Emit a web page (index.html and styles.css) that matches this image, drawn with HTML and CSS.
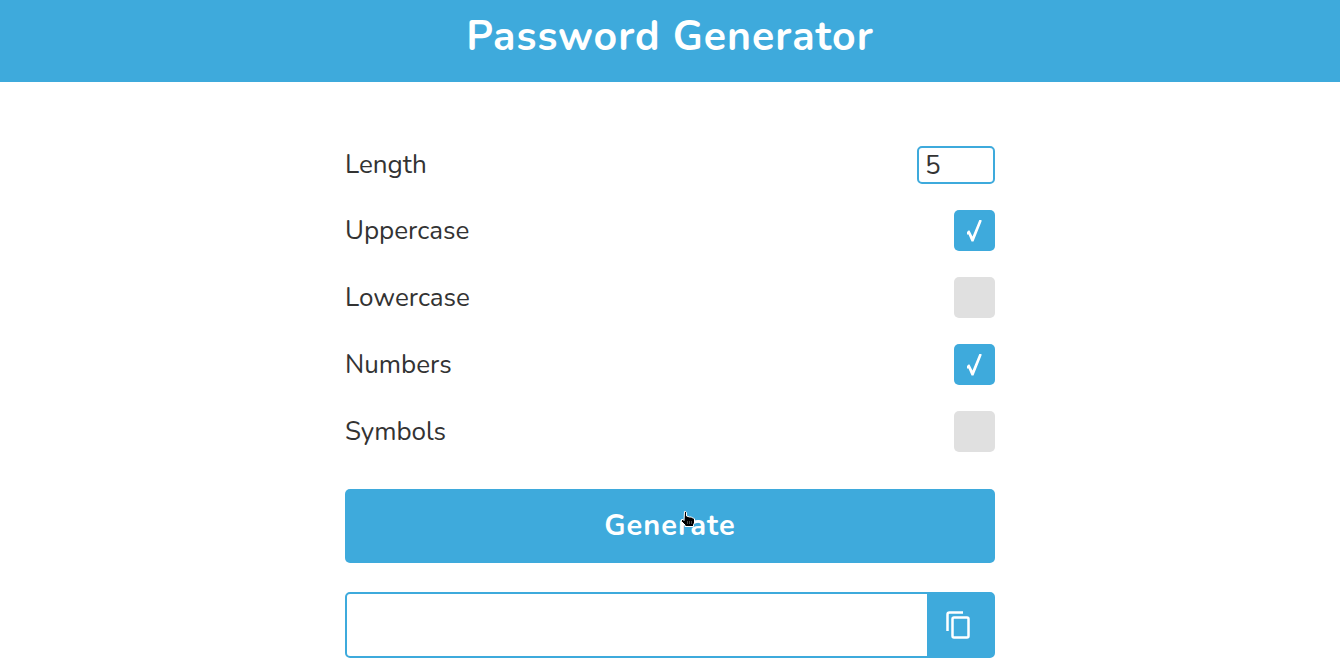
FILE: index.html
```html
<!DOCTYPE html>
<html lang="en">
<head>
<meta charset="utf-8">
<meta name="viewport" content="width=device-width, initial-scale=1">
<title>Password Generator</title>
<link rel="stylesheet" href="styles.css">
</head>
<body>
<header class="header"><h1 class="title">Password Generator</h1></header>
<main class="content">
  <form class="form">
    <div class="options">
      <div class="option"><label for="length">Length</label><input class="length" id="length" type="text" inputmode="numeric" value="5"></div>
      <div class="option"><label for="uppercase">Uppercase</label><input class="check" id="uppercase" type="checkbox" checked></div>
      <div class="option"><label for="lowercase">Lowercase</label><input class="check" id="lowercase" type="checkbox"></div>
      <div class="option"><label for="numbers">Numbers</label><input class="check" id="numbers" type="checkbox" checked></div>
      <div class="option"><label for="symbols">Symbols</label><input class="check" id="symbols" type="checkbox"></div>
    </div>
    <button class="generate" type="button">Generate
      <svg class="pointer" viewBox="0 0 16 17" aria-hidden="true"><path d="M4.500 .5h1l1 1v3.500l3 1h2l1 1h1l1 1v4l-1 1.500v2H5v-1.500L1.500 10.500v-2h1.500l1 1z" fill="#000" stroke="#fff" stroke-linejoin="round"/><path d="M7.500 10v3M9.500 10v3M11.500 10v3" stroke="#666" stroke-width=".7"/></svg>
    </button>
    <div class="result">
      <input class="password" type="text" aria-label="Generated password" readonly>
      <button class="copy" type="button" aria-label="Copy password">
        <svg class="copy-icon" viewBox="0 0 24 28" fill="none" stroke="#fff" stroke-width="2.500"><path d="M1.500 20V3.500q0-2 2-2H17"/><rect x="6.500" y="6.500" width="16" height="20" rx="1.500"/></svg>
      </button>
    </div>
  </form>
</main>
</body>
</html>
```
FILE: styles.css
```css
* { box-sizing: border-box; }

body {
  margin: 0;
  background: #fff;
  color: #333;
  font: 26px/38px Nunito, Lato, sans-serif;
}

.header {
  padding: 12px 16px 20px;
  background: #3eaadc;
  color: #fff;
  text-align: center;
}

.title {
  margin: 0;
  font-size: 41px;
  line-height: 50px;
  font-weight: 700;
  letter-spacing: 1px;
}

.content {
  max-width: 650px;
  margin: 0 auto;
  padding-top: 64px;
}

.options {
  display: grid;
  gap: 26px;
}

.option {
  display: flex;
  align-items: center;
  justify-content: space-between;
}

.length {
  width: 78px;
  height: 38px;
  padding: 0 6px;
  border: 2px solid #3eaadc;
  border-radius: 5px;
  background: #fff;
  color: #333;
  font: inherit;
  line-height: 34px;
}

.check {
  appearance: none;
  display: grid;
  place-items: center;
  width: 41px;
  height: 41px;
  margin: 0;
  border-radius: 5px;
  background: #e0e0e0;
}

.check:checked { background: #3eaadc; }

.check:checked::before {
  content: "";
  width: 16px;
  height: 22px;
  background: #fff;
  clip-path: path("M0 13L2 11L3 11L6 17L13 0L15 0L15 2L7 22L5 22L2 15L0 15Z");
}

.generate {
  position: relative;
  display: block;
  width: 100%;
  height: 74px;
  margin: 37px 0 29px;
  padding: 0;
  border: 0;
  border-radius: 5px;
  background: #3eaadc;
  color: #fff;
  font: inherit;
  font-size: 29px;
  font-weight: 700;
  letter-spacing: 1px;
}

.pointer {
  position: absolute;
  top: 22px;
  left: calc(50% + 10px);
  width: 16px;
  height: 17px;
}

.result {
  display: flex;
  height: 66px;
  border: 2px solid #3eaadc;
  border-radius: 5px;
  background: #3eaadc;
}

.password {
  flex: 1;
  min-width: 0;
  padding: 0 16px;
  border: 0;
  border-radius: 3px 0 0 3px;
  background: #fff;
  color: #333;
  font: inherit;
}

.copy {
  display: grid;
  place-items: center;
  width: 66px;
  padding: 0 5px 0 0;
  border: 0;
  background: #3eaadc;
}

.copy-icon {
  width: 24px;
  height: 28px;
}
```
